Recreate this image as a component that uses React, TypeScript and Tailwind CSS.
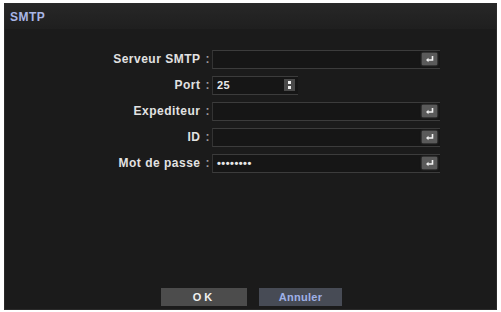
import React from 'react';

const EnterIcon: React.FC = () => (
  <span className="flex h-[12px] w-[15px] items-center justify-center bg-[#5a5a5a] shadow-[0_0_2px_#777]">
    <svg width="10" height="8" viewBox="0 0 10 8">
      <path d="M7.5 1 V5 H2.5" stroke="#f2f2f2" strokeWidth="1.6" fill="none" />
      <path d="M1 5 L3.5 2.8 V7.2 Z" fill="#f2f2f2" />
    </svg>
  </span>
);

const SpinIcon: React.FC = () => (
  <span className="flex h-[12px] w-[11px] flex-col items-center justify-center gap-[2px] bg-[#4a4a4a]">
    <span className="h-[3px] w-[3px] bg-[#eee]" />
    <span className="h-[3px] w-[3px] bg-[#eee]" />
  </span>
);

interface FieldProps {
  label: string;
  value?: string;
  short?: boolean;
  spin?: boolean;
}

const Field: React.FC<FieldProps> = ({ label, value = '', short, spin }) => (
  <>
    <div className="flex h-[26px] items-center justify-end pr-[2px] text-[12px] font-bold tracking-[0.5px] text-[#e2e2e2]">
      {label}
      <span className="ml-[5px] text-[#9a9a9a]">:</span>
    </div>
    <div className="flex h-[26px] items-center">
      <div
        className={`flex h-[19px] items-center justify-between border-y border-[#3c3c3c] border-l border-l-[#333] bg-[#161616] pl-[4px] pr-[3px] ${short ? 'w-[86px]' : 'w-[228px]'}`}
      >
        <span className="text-[11px] font-bold tracking-[0.5px] text-[#e8e8e8]">{value}</span>
        {spin ? <SpinIcon /> : <EnterIcon />}
      </div>
    </div>
  </>
);

export default function App() {
  return (
    <div className="h-[312px] w-[501px] bg-white pl-[4px] pr-[4px] pt-[3px] pb-[2px]" style={{ fontFamily: '"Liberation Sans", Arial, sans-serif' }}>
      <div className="flex h-full flex-col border border-[#2a2a2a] bg-[#1b1b1b]">
        <div className="flex h-[25px] items-center bg-gradient-to-b from-[#272727] to-[#1f1f1f] pl-[5px] text-[12px] font-bold tracking-[0.5px] text-[#a9b6e6]">
          SMTP
        </div>
        <div className="grid grid-cols-[108px_auto] pl-[99px] pt-[17px]">
          <Field label="Serveur SMTP" />
          <Field label="Port" value="25" short spin />
          <Field label="Expediteur" />
          <Field label="ID" />
          <Field label="Mot de passe" value="••••••••" />
        </div>
        <div className="flex-1" />
        <div className="flex justify-center gap-[12px] pb-[3px] pl-[2px]">
          <button className="h-[18px] w-[86px] bg-[#4c4c4c] text-[11px] font-bold tracking-[3px] text-[#f0f0f0]">OK</button>
          <button className="h-[18px] w-[83px] bg-[#474b55] text-[11px] font-bold tracking-[0.3px] text-[#9fb0e6]">Annuler</button>
        </div>
      </div>
    </div>
  );
}
